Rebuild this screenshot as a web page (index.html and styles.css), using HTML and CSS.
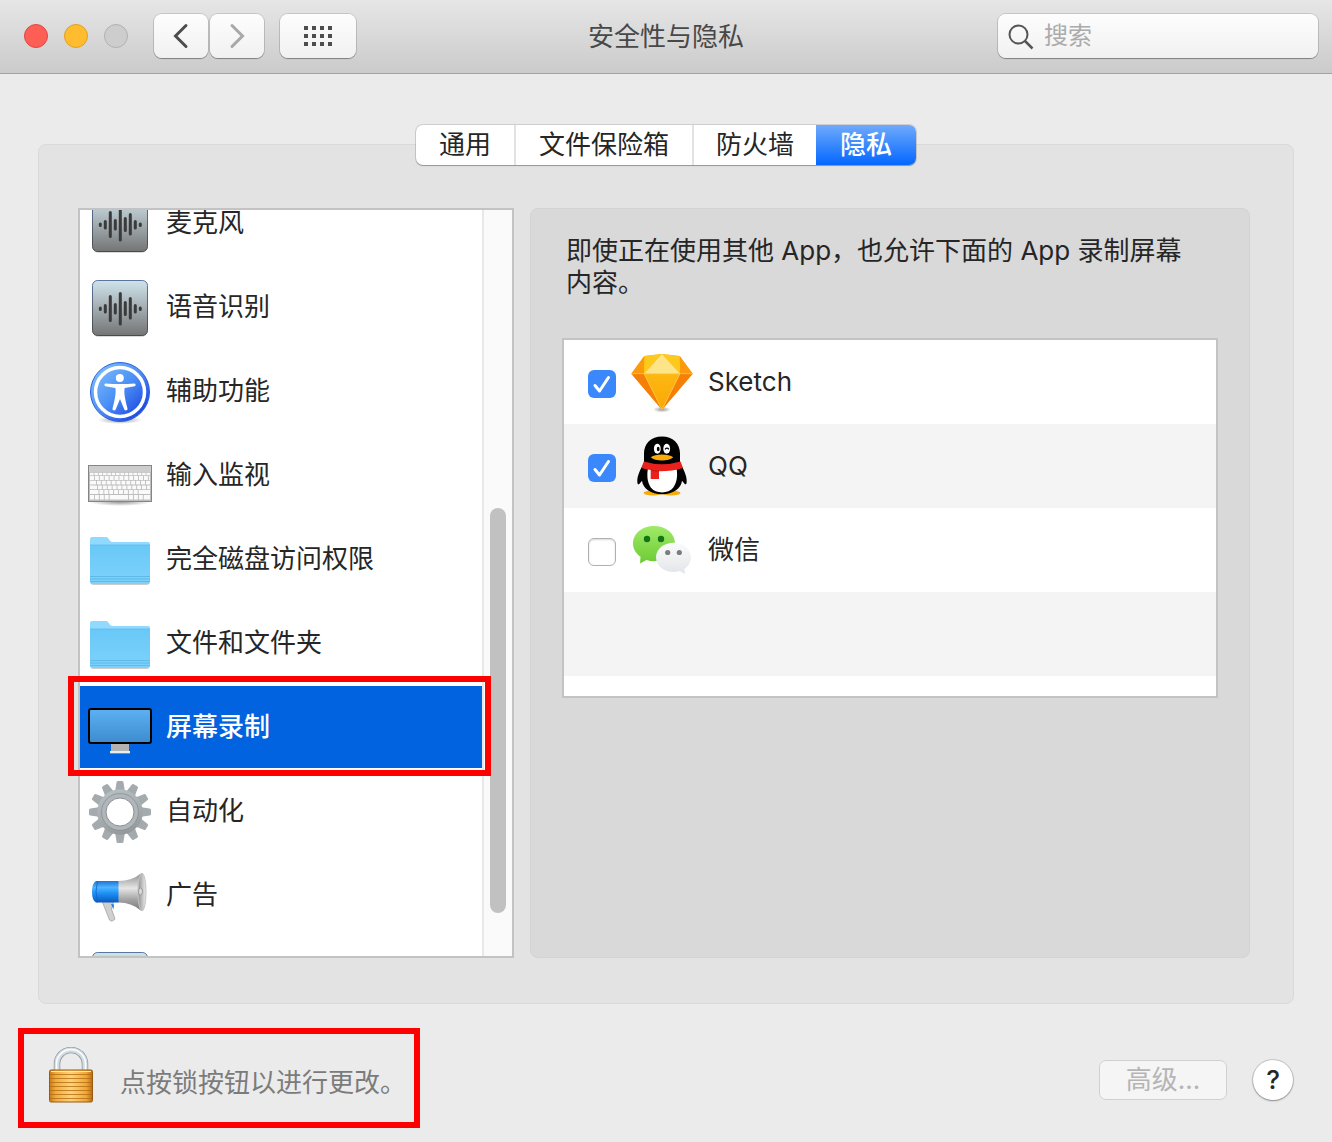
FILE: index.html
```html
<!DOCTYPE html>
<html lang="zh-CN">
<head>
	<meta charset="UTF-8">
	<meta name="viewport" content="width=device-width,initial-scale=1.0">
	<title>安全性与隐私</title>
	<link rel="stylesheet" href="styles.css">
</head>
<body>
	<!-- 公用图标 -->
	<svg class="defs" width="0" height="0" aria-hidden="true">
		<defs>
			<linearGradient id="waveBg" x1="0" y1="0" x2="0" y2="1">
				<stop offset="0" stop-color="#cfe3ec"/>
				<stop offset="0.5" stop-color="#a3adb1"/>
				<stop offset="1" stop-color="#747474"/>
			</linearGradient>
			<linearGradient id="waveLine" x1="0" y1="0" x2="0" y2="1">
				<stop offset="0" stop-color="#5a769c"/>
				<stop offset="1" stop-color="#4a4a4a"/>
			</linearGradient>
			<linearGradient id="folderBg" x1="0" y1="0" x2="0" y2="1">
				<stop offset="0" stop-color="#69c8f7"/>
				<stop offset="1" stop-color="#7dd2fb"/>
			</linearGradient>
			<linearGradient id="accessBg" x1="0" y1="0" x2="1" y2="1">
				<stop offset="0.1" stop-color="#7cbcfb"/>
				<stop offset="0.5" stop-color="#4a8ff5"/>
				<stop offset="0.9" stop-color="#1b40e0"/>
			</linearGradient>
			<linearGradient id="screenBg" x1="0" y1="0" x2="0" y2="1">
				<stop offset="0" stop-color="#5db0f2"/>
				<stop offset="1" stop-color="#3c8ccf"/>
			</linearGradient>
			<linearGradient id="gearBg" gradientUnits="userSpaceOnUse" x1="20" y1="0" x2="40" y2="64">
				<stop offset="0" stop-color="#bcc5c9"/>
				<stop offset="0.5" stop-color="#a8aeb1"/>
				<stop offset="1" stop-color="#8a8e91"/>
			</linearGradient>
			<linearGradient id="hornBlue" x1="0" y1="0" x2="0" y2="1">
				<stop offset="0" stop-color="#1d74d8"/>
				<stop offset="0.3" stop-color="#4db4ff"/>
				<stop offset="0.6" stop-color="#1a8cf5"/>
				<stop offset="1" stop-color="#0c58bd"/>
			</linearGradient>
			<linearGradient id="hornGray" x1="0" y1="0" x2="0" y2="1">
				<stop offset="0" stop-color="#8c8c8c"/>
				<stop offset="0.4" stop-color="#e6e6e6"/>
				<stop offset="0.7" stop-color="#a3a3a3"/>
				<stop offset="1" stop-color="#787878"/>
			</linearGradient>
			<linearGradient id="hornMouth" x1="0" y1="0" x2="1" y2="0">
				<stop offset="0" stop-color="#8f8f8f"/>
				<stop offset="1" stop-color="#ededed"/>
			</linearGradient>
			<linearGradient id="wechatGreen" x1="0" y1="0" x2="0" y2="1">
				<stop offset="0" stop-color="#a0ea68"/>
				<stop offset="1" stop-color="#6ccb34"/>
			</linearGradient>
			<linearGradient id="wechatWhite" x1="0" y1="0" x2="0" y2="1">
				<stop offset="0" stop-color="#fbfbfc"/>
				<stop offset="1" stop-color="#e2e5e8"/>
			</linearGradient>
			<linearGradient id="sketchFront" x1="0" y1="0" x2="0" y2="1">
				<stop offset="0" stop-color="#fdb813"/>
				<stop offset="1" stop-color="#fba703"/>
			</linearGradient>
			<linearGradient id="lockBody" x1="0" y1="0" x2="1" y2="0">
				<stop offset="0" stop-color="#c97b17"/>
				<stop offset="0.15" stop-color="#f2ad3d"/>
				<stop offset="0.5" stop-color="#fdd276"/>
				<stop offset="0.85" stop-color="#f0a836"/>
				<stop offset="1" stop-color="#bd6c10"/>
			</linearGradient>
			<radialGradient id="shadow">
				<stop offset="0" stop-color="#000" stop-opacity="0.4"/>
				<stop offset="1" stop-color="#000" stop-opacity="0"/>
			</radialGradient>
		</defs>
		<symbol id="wave" viewBox="0 0 64 64">
			<rect x="5" y="6" width="54" height="55" rx="5" fill="#000" opacity="0.15"/>
			<rect x="4.500" y="4.500" width="55" height="55" rx="5" fill="url(#waveBg)" stroke="url(#waveLine)"/>
			<path d="M12.300 32v1.500M17.300 29.500v6.500M22.300 20.500v24M27.300 28.500v8.500M32.300 17.500v30.500M37.300 26.500v12M42.300 22.500v19.500M47.300 29.500v6.500M52.300 32v1.500" stroke="#3b3b3b" stroke-width="3" stroke-linecap="round"/>
		</symbol>
		<symbol id="folder" viewBox="0 0 64 64">
			<rect x="3" y="50" width="58" height="7" rx="2" fill="#000" opacity="0.2"/>
			<path d="M2 54V11q0-2 2-2h14c3 0 3 5 7 5h35q2 0 2 2v38z" fill="#90daff"/>
			<path d="M2 17h60v37q0 2-2 2H4q-2 0-2-2z" fill="url(#folderBg)"/>
			<path d="M2 17h60" stroke="#5bb9e9" stroke-width="0.700"/>
			<path d="M2 48.500h60M2 51h60M2 53.500h60" stroke="#57b4e2" stroke-width="0.800"/>
		</symbol>
		<symbol id="tick" viewBox="0 0 28 28">
			<path d="M7 15.500l4.500 5.500L20.500 7.500" fill="none" stroke="#fff" stroke-width="3" stroke-linecap="round" stroke-linejoin="round"/>
		</symbol>
	</svg>

	<div class="window">
		<!-- 标题栏 -->
		<header class="titlebar">
			<div class="tools">
				<div class="lights">
					<button class="light red" type="button" aria-label="关闭"></button>
					<button class="light yellow" type="button" aria-label="最小化"></button>
					<button class="light gray" type="button" aria-label="缩放" disabled></button>
				</div>
				<div class="history">
					<button class="tool" type="button" aria-label="后退">
						<svg width="28" height="28" viewBox="0 0 28 28"><path d="M19 3.500L8.500 14L19 24.500" fill="none" stroke="#4d4d4d" stroke-width="3" stroke-linecap="round"/></svg>
					</button>
					<button class="tool" type="button" aria-label="前进" disabled>
						<svg width="28" height="28" viewBox="0 0 28 28"><path d="M9 3.500L19.500 14L9 24.500" fill="none" stroke="#a8a8a8" stroke-width="3" stroke-linecap="round"/></svg>
					</button>
				</div>
				<button class="tool wide" type="button" aria-label="显示全部">
					<svg width="28" height="20" viewBox="0 0 28 20"><path d="M0 2h28M0 10h28M0 18h28" stroke="#4d4d4d" stroke-width="4" stroke-dasharray="4 4"/></svg>
				</button>
			</div>
			<h1>安全性与隐私</h1>
			<label class="search">
				<svg width="26" height="28" viewBox="0 0 26 28" aria-hidden="true"><circle cx="10.500" cy="12.500" r="9" fill="none" stroke="#555" stroke-width="2"/><path d="M17 19l7.500 7.500" stroke="#555" stroke-width="2.500"/></svg>
				<input type="search" placeholder="搜索" aria-label="搜索">
			</label>
		</header>

		<main>
			<!-- 选项卡 -->
			<div class="tabs" role="tablist">
				<button type="button" role="tab" aria-selected="false">通用</button>
				<button type="button" role="tab" aria-selected="false">文件保险箱</button>
				<button type="button" role="tab" aria-selected="false">防火墙</button>
				<button class="active" type="button" role="tab" aria-selected="true">隐私</button>
			</div>
			<div class="panel">
				<!-- 左侧列表 -->
				<nav class="sidebar">
					<div class="scroll">
						<ul>
							<li><a href="#mic"><svg class="icon"><use href="#wave"/></svg><span>麦克风</span></a></li>
							<li><a href="#speech"><svg class="icon"><use href="#wave"/></svg><span>语音识别</span></a></li>
							<li><a href="#access">
								<svg class="icon" viewBox="0 0 64 64">
									<ellipse cx="32" cy="60" rx="22" ry="4" fill="url(#shadow)"/>
									<circle cx="32" cy="32" r="29.500" fill="url(#accessBg)" stroke="#2c62d8"/>
									<circle cx="32" cy="32" r="24.500" fill="none" stroke="#fff" stroke-width="3.500"/>
									<circle cx="31.800" cy="18" r="4" fill="#fff"/>
									<path d="M17.500 23.500c-1.500 0-1.500 2.500 0 2.800l9.800 1.700c.8 3 .5 8-2.800 20.500-.4 2 2.400 2.800 3.200 1L32 39l4.300 10.500c.8 1.800 3.600 1 3.200-1-3.300-12.500-3.600-17.500-2.800-20.500l9.800-1.700c1.500-.3 1.500-2.800 0-2.800-10 .8-19 .8-29 0z" fill="#fff"/>
								</svg><span>辅助功能</span></a></li>
							<li><a href="#input">
								<svg class="icon" viewBox="0 0 64 64">
									<ellipse cx="32" cy="58" rx="31" ry="4" fill="url(#shadow)"/>
									<rect x="0.500" y="21.500" width="63" height="36" fill="#bdbdbd" stroke="#858585"/>
									<path d="M1 25h62" stroke="#cdcdcd" stroke-width="6"/>
									<path d="M2 30h60" stroke="#fafafa" stroke-width="2.500" stroke-dasharray="3.600 0.740"/>
									<path d="M2 34h60M5 43.300h57" stroke="#fafafa" stroke-width="3.800" stroke-dasharray="4 0.900"/>
									<path d="M2 38.700h60" stroke="#fafafa" stroke-width="3.800" stroke-dasharray="6 0.900 4 0.900 4 0.900 4 0.900 4 0.900 4 0.900 4 0.900 4 0.900 4 0.900 4 0.900 4 0.900 5 0"/>
									<path d="M2 48h60" stroke="#fafafa" stroke-width="3.800" stroke-dasharray="8.500 0.900 4 0.900 4 0.900 4 0.900 4 0.900 4 0.900 4 0.900 4 0.900 4 0.900 9 0"/>
									<path d="M2 43.300h3" stroke="#fafafa" stroke-width="3.800"/>
									<path d="M2 53.300h60" stroke="#fafafa" stroke-width="4.500" stroke-dasharray="4 0.900 4 0.900 4 0.900 4 0.900 18.500 0.900 4 0.900 4 0.900 4 0.900 4 0"/>
								</svg><span>输入监视</span></a></li>
							<li><a href="#disk"><svg class="icon"><use href="#folder"/></svg><span>完全磁盘访问权限</span></a></li>
							<li><a href="#files"><svg class="icon"><use href="#folder"/></svg><span>文件和文件夹</span></a></li>
							<li class="current"><a href="#screen" aria-current="true">
								<svg class="icon" viewBox="0 0 64 64">
									<path d="M23 47h18v8H23z" fill="#b3b3b3"/>
									<path d="M22 55h20v2.500H22z" fill="#ececec"/>
									<path d="M22 57.500h20" stroke="#777" stroke-width="0.600"/>
									<rect x="1" y="13" width="62" height="34" rx="2" fill="url(#screenBg)" stroke="#000" stroke-width="2"/>
								</svg><span>屏幕录制</span></a></li>
							<li><a href="#auto">
								<svg class="icon" viewBox="0 0 64 64">
									<defs><path id="teeth" d="M28.500 2.500q0-1.500 1.500-1.500h4q1.500 0 1.500 1.500L37 12H27zM28.500 61.500q0 1.500 1.500 1.500h4q1.500 0 1.500-1.500L37 52H27z"/></defs>
									<g fill="#a4abae">
										<use href="#teeth"/>
										<use href="#teeth" transform="rotate(30 32 32)"/>
										<use href="#teeth" transform="rotate(60 32 32)"/>
										<use href="#teeth" transform="rotate(90 32 32)"/>
										<use href="#teeth" transform="rotate(120 32 32)"/>
										<use href="#teeth" transform="rotate(150 32 32)"/>
									</g>
									<circle cx="32" cy="32" r="18.500" fill="none" stroke="url(#gearBg)" stroke-width="8.500"/>
									<circle cx="32" cy="32" r="16" fill="none" stroke="#b0b6b9" stroke-width="4"/>
									<circle cx="32" cy="32" r="18.500" fill="none" stroke="#8b9093" stroke-width="0.800"/>
									<circle cx="32" cy="32" r="14" fill="none" stroke="#8b9093"/>
								</svg><span>自动化</span></a></li>
							<li><a href="#ads">
								<svg class="icon" viewBox="0 0 64 64">
									<path d="M14 37l7.500 19q1 1.500 3 .800t2.500-2L23.500 45l2-7z" fill="#d0d0d0" stroke="#999" stroke-width="0.700"/>
									<path d="M23 40l3 .500-.500 5z" fill="#1a7fe6"/>
									<path d="M8 17h23v21.500H8q-4-2-4-10.700T8 17z" fill="url(#hornBlue)"/>
									<path d="M9.500 17q-3 10 0 21.500" fill="none" stroke="#1261bd" stroke-width="0.800"/>
									<path d="M30.500 17Q44 17 53.500 9v38Q44 38.500 30.500 38.500z" fill="url(#hornGray)"/>
									<ellipse cx="54" cy="28" rx="4" ry="19" fill="url(#hornMouth)" stroke="#c4c4c4"/>
									<ellipse cx="52.500" cy="27.500" rx="2" ry="3.500" fill="#d9d9d9" stroke="#868686" stroke-width="0.700"/>
								</svg><span>广告</span></a></li>
							<li><a href="#more"><svg class="icon"><use href="#wave"/></svg></a></li>
						</ul>
						<div class="track"><div class="thumb"></div></div>
					</div>
					<div class="mark"></div>
				</nav>
				<!-- 右侧内容 -->
				<section class="detail">
					<p>即使正在使用其他 App&#xFF0C;也允许下面的 App 录制屏幕内容。</p>
					<ul class="apps">
						<li><label>
							<span class="check"><input type="checkbox" checked><svg><use href="#tick"/></svg></span>
							<svg class="icon" viewBox="0 0 64 64">
								<ellipse cx="32" cy="59.500" rx="9" ry="3" fill="url(#shadow)"/>
								<path d="M1.300 23.700L14.300 6L32 4l17.700 2L62.700 23.700L32 59.700z" fill="#fdad00"/>
								<path d="M1.300 23.700L14.300 6L14 23.700z" fill="#fa9a0c"/>
								<path d="M62.700 23.700L49.700 6L50 23.700z" fill="#fa9a0c"/>
								<path d="M14.300 6L32 4L14 23.700z" fill="#fdc91c"/>
								<path d="M49.700 6L32 4L50 23.700z" fill="#fdc91c"/>
								<path d="M32 4L14 23.700h36z" fill="#fee489"/>
								<path d="M1.300 23.700H14l18 36z" fill="#f67f08"/>
								<path d="M62.700 23.700H50l-18 36z" fill="#f67f08"/>
								<path d="M14 23.700h36l-18 36z" fill="url(#sketchFront)"/>
								<path d="M1.300 23.700h61.400M14 23.700l18 36 18-36" fill="none" stroke="#fed65f" stroke-width="0.600"/>
							</svg>Sketch</label></li>
						<li><label>
							<span class="check"><input type="checkbox" checked><svg><use href="#tick"/></svg></span>
							<svg class="icon" viewBox="0 0 64 64">
								<ellipse cx="23" cy="59" rx="9.500" ry="2.600" fill="#f9ab0a"/>
								<ellipse cx="41" cy="59" rx="9.500" ry="2.600" fill="#f9ab0a"/>
								<path d="M32 2.500c-11 0-18 7-18 17v9c-3 6-7 13-6.700 19 .1 3 1 3.500 2.200 2.200l2.500-3c1 8 9 13.500 20 13.500s19-5.500 20-13.500l2.500 3c1.200 1.300 2.100.8 2.200-2.200.3-6-3.700-13-6.700-19v-9c0-10-7-17-18-17z" fill="#000"/>
								<path d="M18 34h28.500c1.200 7 .7 14-3.200 19.500-5 6.500-17.500 6.500-22.500 0C17 48 16.800 41 18 34z" fill="#fff"/>
								<ellipse cx="27.300" cy="14.700" rx="3.400" ry="5" fill="#fff"/>
								<ellipse cx="36.700" cy="14.700" rx="3.400" ry="5" fill="#fff"/>
								<ellipse cx="28.200" cy="15" rx="1.400" ry="2.200" fill="#000"/>
								<path d="M35 15.300q2-2.400 4 0" fill="none" stroke="#000" stroke-width="1.200"/>
								<path d="M20.700 23.300q4-2.800 11.300-2.800t11.300 2.800q-4 3.200-11.300 3.200t-11.300-3.200z" fill="#f9ab0a"/>
								<path d="M13.800 27.500Q32 33 50.500 27.500l2.500 6.500Q42 37.500 29 37.300V45h-8.300v-9Q16 35.500 11.500 34z" fill="#e8211d"/>
								<path d="M21 36q4 1.200 8 1.200" fill="none" stroke="#b5120f" stroke-width="0.700"/>
							</svg>QQ</label></li>
						<li><label>
							<span class="check"><input type="checkbox"><svg><use href="#tick"/></svg></span>
							<svg class="icon" viewBox="0 0 64 64">
								<path d="M24 8C12 8 3 15.700 3 25.500c0 5.500 3 10 7.500 13.300L10 45.500l6.500-3.500c2.500.8 5 1.300 7.500 1.300 12 0 21-7.500 21-17.700S36 8 24 8z" fill="url(#wechatGreen)"/>
								<circle cx="17" cy="21" r="3.200" fill="#147316"/>
								<circle cx="31" cy="21" r="3.200" fill="#147316"/>
								<path d="M43.500 24.700c-10 0-17.500 6.500-17.500 14.600S33.500 54 43.500 54c2 0 4-.3 6-.9l5.500 3-.5-5.300c4-2.500 6.500-6.800 6.500-11.500 0-8.100-7.500-14.600-17.500-14.600z" fill="url(#wechatWhite)"/>
								<circle cx="37.700" cy="34.500" r="2.600" fill="#7d7d7d"/>
								<circle cx="49.300" cy="34.500" r="2.600" fill="#7d7d7d"/>
							</svg>微信</label></li>
					</ul>
				</section>
			</div>
		</main>

		<!-- 底部 -->
		<footer>
			<div class="lock">
				<button type="button" aria-label="锁">
					<svg width="44" height="56" viewBox="0 0 44 56">
						<path d="M8 25V17a14 14 0 0 1 28 0v8" fill="none" stroke="#8c959c" stroke-width="6.500"/>
						<path d="M8 25V17a14 14 0 0 1 28 0v8" fill="none" stroke="#d3dce2" stroke-width="5"/>
						<path d="M7.500 25V17a14.500 14.500 0 0 1 29 0v8" fill="none" stroke="#fff" stroke-width="1.500"/>
						<rect x="0.500" y="23" width="43" height="32" rx="1.500" fill="url(#lockBody)" stroke="#9a5a12"/>
						<path d="M1 27.500h42M1 31.500h42M1 35.500h42M1 39.500h42M1 43.500h42M1 47.500h42M1 51.500h42" stroke="#b06a12" stroke-width="1" opacity="0.750"/>
						<path d="M2 24.500h40" stroke="#ffe9a8" stroke-width="1"/>
					</svg>
				</button>
				<span>点按锁按钮以进行更改。</span>
			</div>
			<div class="actions">
				<button class="advanced" type="button" disabled>高级...</button>
				<button class="help" type="button" aria-label="帮助">?</button>
			</div>
		</footer>
	</div>
</body>
</html>
```

FILE: styles.css
```css
*{
	margin: 0;
	padding: 0;
	box-sizing: border-box;
}
body{
	font: normal 26px/32px Inter, "Noto Sans CJK SC", sans-serif;
	color: #262626;
	background: #ebebeb;
}
button, input{
	font: inherit;
	color: inherit;
	border: 0;
	background: none;
}
svg{
	display: block;
	flex: none;
}
ul{
	list-style: none;
}
a{
	color: inherit;
	text-decoration: none;
}
.defs{
	position: absolute;
}
.window{
	display: flex;
	flex-direction: column;
	height: 100vh;
	min-height: 1000px;
	min-width: 1100px;
}
/*标题栏*/
.titlebar{
	display: grid;
	grid-template-columns: 1fr auto 1fr;
	align-items: center;
	height: 74px;
	padding: 0 14px 2px;
	background: linear-gradient(#e6e6e6, #cbcbcb);
	border-bottom: 1px solid #a3a3a3;
}
.titlebar h1{
	padding-top: 2px;
	font-size: 26px;
	font-weight: normal;
	color: #484848;
}
.tools, .lights, .history{
	display: flex;
	align-items: center;
}
.tools{
	padding-left: 10px;
}
.lights{
	gap: 16px;
	margin-right: 26px;
}
.light{
	width: 24px;
	height: 24px;
	border-radius: 50%;
}
.red{
	background: #fd5f57;
	border: 1px solid #e2463f;
}
.yellow{
	background: #febc2e;
	border: 1px solid #e0a01f;
}
.gray{
	background: #cdcdcd;
	border: 1px solid #b1b1b1;
}
.history{
	gap: 2px;
	margin-right: 16px;
}
.tool{
	display: flex;
	align-items: center;
	justify-content: center;
	width: 54px;
	height: 44px;
	border-radius: 8px;
	background: linear-gradient(#fdfdfd, #f1f1f1);
	box-shadow: 0 0 0 1px rgba(0,0,0,.12), 0 1px 1px rgba(0,0,0,.3);
}
.wide{
	width: 76px;
}
.search{
	justify-self: end;
	display: flex;
	align-items: center;
	gap: 10px;
	width: 320px;
	height: 44px;
	padding: 0 10px;
	font-size: 24px;
	border-radius: 8px;
	background: linear-gradient(#fdfdfd, #f1f1f1);
	box-shadow: 0 0 0 1px rgba(0,0,0,.12), 0 1px 1px rgba(0,0,0,.3);
}
.search input{
	flex: 1;
	min-width: 0;
	outline: none;
}
.search input::placeholder{
	color: #ababab;
}
/*主体*/
main{
	flex: 1;
	min-height: 0;
	display: flex;
	flex-direction: column;
	padding: 51px 38px 0;
}
/*选项卡压在面板上边框*/
.tabs{
	position: relative;
	z-index: 1;
	align-self: center;
	display: flex;
	height: 40px;
	margin-bottom: -21px;
	border-radius: 7px;
	background: #fff;
	box-shadow: 0 0 0 1px rgba(0,0,0,.12), 0 1px 1px rgba(0,0,0,.25);
}
.tabs button{
	padding: 0 23px;
	border-right: 2px solid #e2e2e2;
}
.tabs button:nth-child(3){
	padding: 0 22px;
	border-right: 0;
}
.tabs .active{
	padding: 0 24px;
	border: 0;
	color: #fff;
	font-weight: 500;
	border-radius: 0 7px 7px 0;
	background: linear-gradient(#6eaafc, #0467ff);
}
.panel{
	flex: 1;
	min-height: 0;
	display: grid;
	grid-template-columns: 436px 1fr;
	grid-template-rows: minmax(0, 1fr);
	gap: 16px;
	padding: 63px 43px 45px 39px;
	border: 1px solid #d9d9d9;
	border-radius: 8px;
	background: #e3e3e3;
}
/*左侧列表*/
.sidebar{
	position: relative;
	border: 2px solid #c3c3c3;
	background: #fff;
}
.scroll{
	display: flex;
	height: 100%;
	overflow: hidden;
}
.scroll ul{
	flex: 1;
	margin-top: -28px;
}
.scroll li{
	height: 84px;
	border-bottom: 2px solid #fff;
}
.scroll a{
	display: flex;
	align-items: center;
	gap: 14px;
	height: 84px;
	padding: 0 8px;
}
.scroll span{
	padding-bottom: 2px;
}
.icon{
	width: 64px;
	height: 64px;
}
.current{
	color: #fff;
	font-weight: 500;
	background: #0263e0;
	background-clip: padding-box;
}
.track{
	display: grid;
	grid-template-rows: 298fr 405fr 43fr;
	width: 30px;
	padding: 0 6px;
	border-left: 2px solid #e8e8e8;
	background: #fafafa;
}
.thumb{
	grid-row: 2;
	width: 16px;
	border-radius: 8px;
	background: #c1c1c1;
}
/*红框标注*/
.mark{
	position: absolute;
	top: 466px;
	left: -12px;
	width: 423px;
	height: 100px;
	border: 6px solid #f00;
}
/*右侧内容*/
.detail{
	padding: 26px 31px;
	border: 1px solid #d3d3d3;
	border-radius: 8px;
	background: #d9d9d9;
}
.detail p{
	padding: 0 24px 0 4px;
	margin-bottom: 39px;
}
.apps{
	min-height: 360px;
	border: 2px solid #c3c3c3;
	background: repeating-linear-gradient(#fff 0, #fff 84px, #f4f4f4 84px, #f4f4f4 168px);
}
.apps label{
	display: flex;
	align-items: center;
	gap: 14px;
	height: 84px;
	padding: 0 24px;
}
.check{
	display: grid;
	padding-top: 4px;
}
.check input, .check svg{
	grid-area: 1 / 1;
	width: 28px;
	height: 28px;
}
.check input{
	appearance: none;
	border: 1px solid #b0b0b0;
	border-radius: 6px;
	background: #fff;
	box-shadow: inset 0 1px 2px rgba(0,0,0,.15);
}
.check input:checked{
	border: 0;
	background: #3b88fd;
	box-shadow: none;
}
.check svg{
	visibility: hidden;
	pointer-events: none;
}
.check input:checked + svg{
	visibility: visible;
}
/*底部*/
footer{
	display: flex;
	align-items: center;
	justify-content: space-between;
	padding: 24px 39px 14px 18px;
}
.lock{
	display: flex;
	align-items: center;
	gap: 27px;
	height: 100px;
	padding: 0 8px 0 25px;
	border: 6px solid #f00;
	color: #7b7b7b;
}
.lock button{
	padding-bottom: 6px;
}
.lock span{
	padding-top: 10px;
}
.actions{
	display: flex;
	align-items: center;
	gap: 26px;
	padding-top: 4px;
}
.advanced{
	width: 128px;
	height: 40px;
	border: 1px solid #d0d0d0;
	border-radius: 7px;
	color: #b5b5b5;
	background: #f5f5f5;
}
.help{
	width: 40px;
	height: 40px;
	border-radius: 50%;
	font-weight: 500;
	background: #fff;
	box-shadow: 0 0 0 1px rgba(0,0,0,.15), 0 1px 2px rgba(0,0,0,.3);
}
```
